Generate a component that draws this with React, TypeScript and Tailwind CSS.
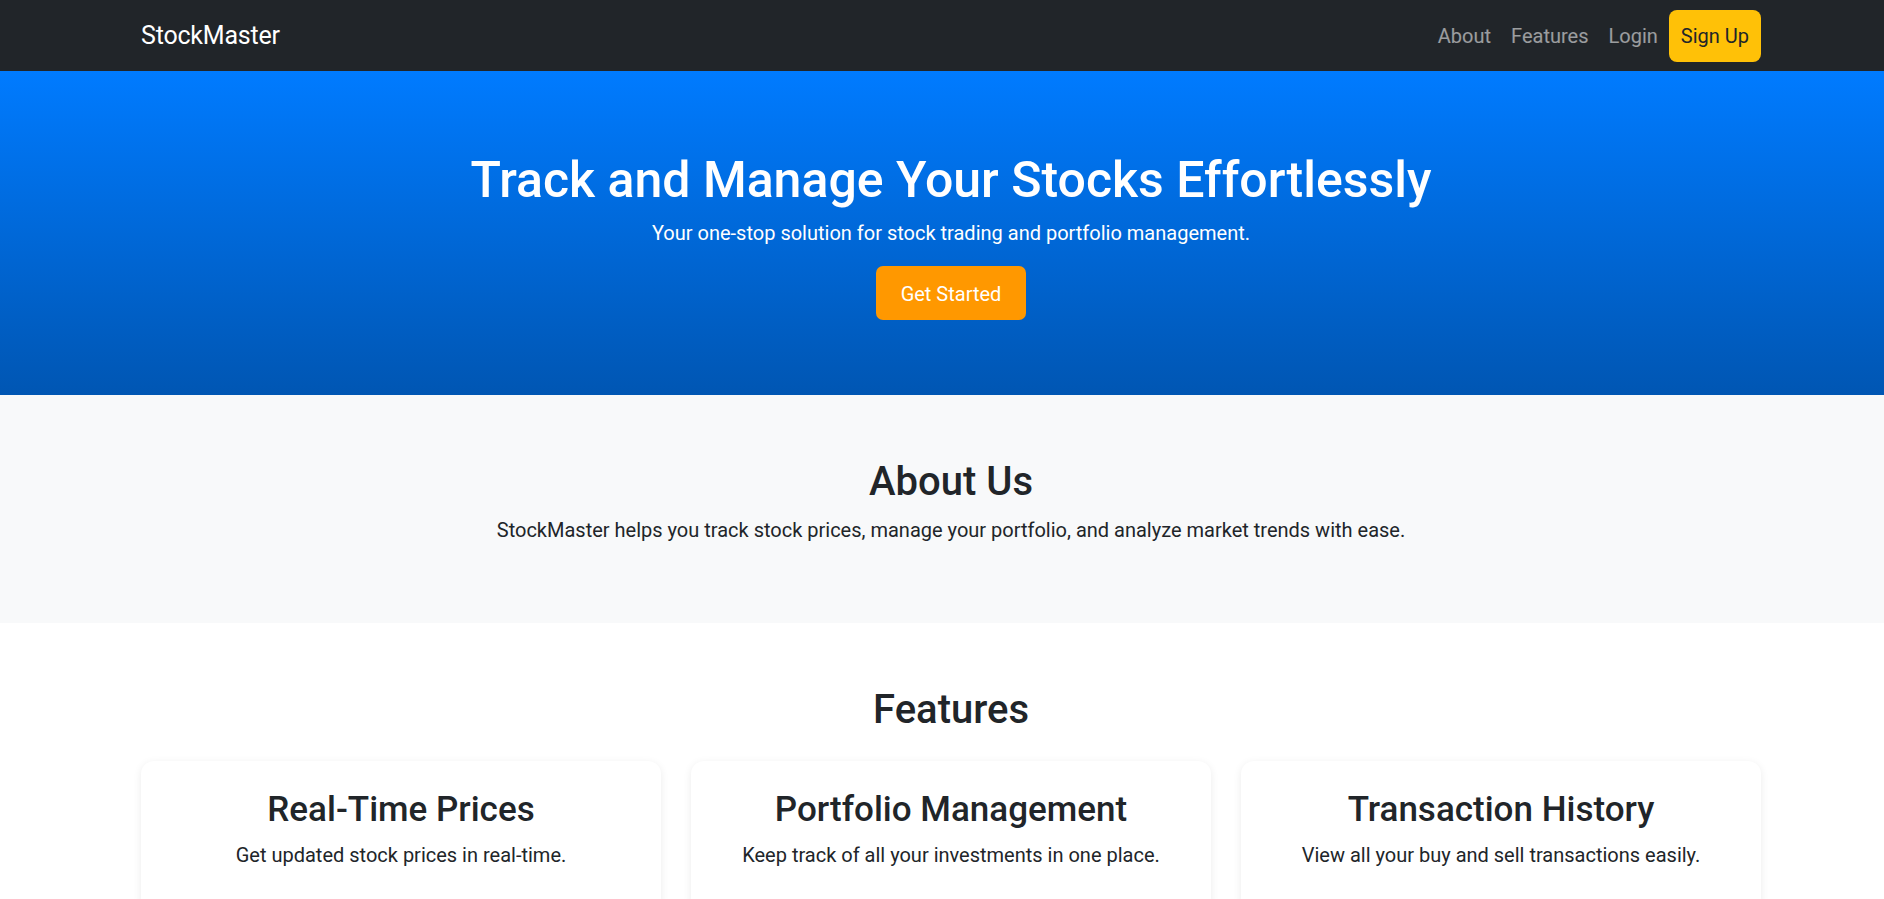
const features = [
  { title: "Real-Time Prices", text: "Get updated stock prices in real-time." },
  { title: "Portfolio Management", text: "Keep track of all your investments in one place." },
  { title: "Transaction History", text: "View all your buy and sell transactions easily." },
];

export default function App() {
  return (
    <div className="min-h-screen bg-white text-[#212529] font-['Roboto','Noto_Sans',sans-serif]">
      <nav className="bg-[#212529] h-[71px]">
        <div className="w-[1620px] ml-[141px] h-full flex items-center justify-between">
          <a className="text-[25px] leading-[37px] text-white tracking-[-0.2px]">StockMaster</a>
          <div className="flex items-center">
            <a className="px-[10px] text-[20px] leading-[30px] text-white/55">About</a>
            <a className="px-[10px] text-[20px] leading-[30px] text-white/55">Features</a>
            <a className="px-[10px] text-[20px] leading-[30px] text-white/55">Login</a>
            <a className="ml-[1px] h-[52px] px-[12px] flex items-center rounded-[8px] bg-[#ffc107] text-[20px] leading-[30px] text-[#212529]">Sign Up</a>
          </div>
        </div>
      </nav>

      <section className="bg-gradient-to-b from-[#007bff] to-[#0056b3] py-[75px] text-white">
        <div className="w-[1620px] ml-[141px] text-center">
          <h1 className="text-[50px] leading-[60px] font-medium pt-[4px] mb-[6px]">Track and Manage Your Stocks Effortlessly</h1>
          <p className="text-[20px] leading-[30px] pt-[2px] mb-[18px]">Your one-stop solution for stock trading and portfolio management.</p>
          <button className="bg-[#ff9800] text-white text-[20px] leading-[30px] px-[25px] pt-[13px] pb-[11px] rounded-[7px]">Get Started</button>
        </div>
      </section>

      <section className="bg-[#f8f9fa] py-[60px]">
        <div className="w-[1620px] ml-[141px] text-center">
          <h2 className="text-[40px] leading-[48px] font-medium pt-[3px] mb-[7px]">About Us</h2>
          <p className="text-[20px] leading-[30px] pt-[2px] mb-[18px]">StockMaster helps you track stock prices, manage your portfolio, and analyze market trends with ease.</p>
        </div>
      </section>

      <section className="pt-[60px] pb-[60px]">
        <div className="w-[1620px] ml-[141px] text-center">
          <h2 className="text-[40px] leading-[48px] font-medium pt-[3px] mb-[27px]">Features</h2>
          <div className="grid grid-cols-3 gap-[30px]">
            {features.map((f) => (
              <div key={f.title} className="bg-white rounded-[13px] shadow-[0_2px_8px_rgba(0,0,0,0.08)] px-[25px] pt-[25px] pb-[25px]">
                <h3 className="text-[35px] leading-[42px] font-medium pt-[3px] mb-[7px]">{f.title}</h3>
                <p className="text-[20px] leading-[30px] pt-[2px] mb-[18px]">{f.text}</p>
              </div>
            ))}
          </div>
        </div>
      </section>
    </div>
  );
}
